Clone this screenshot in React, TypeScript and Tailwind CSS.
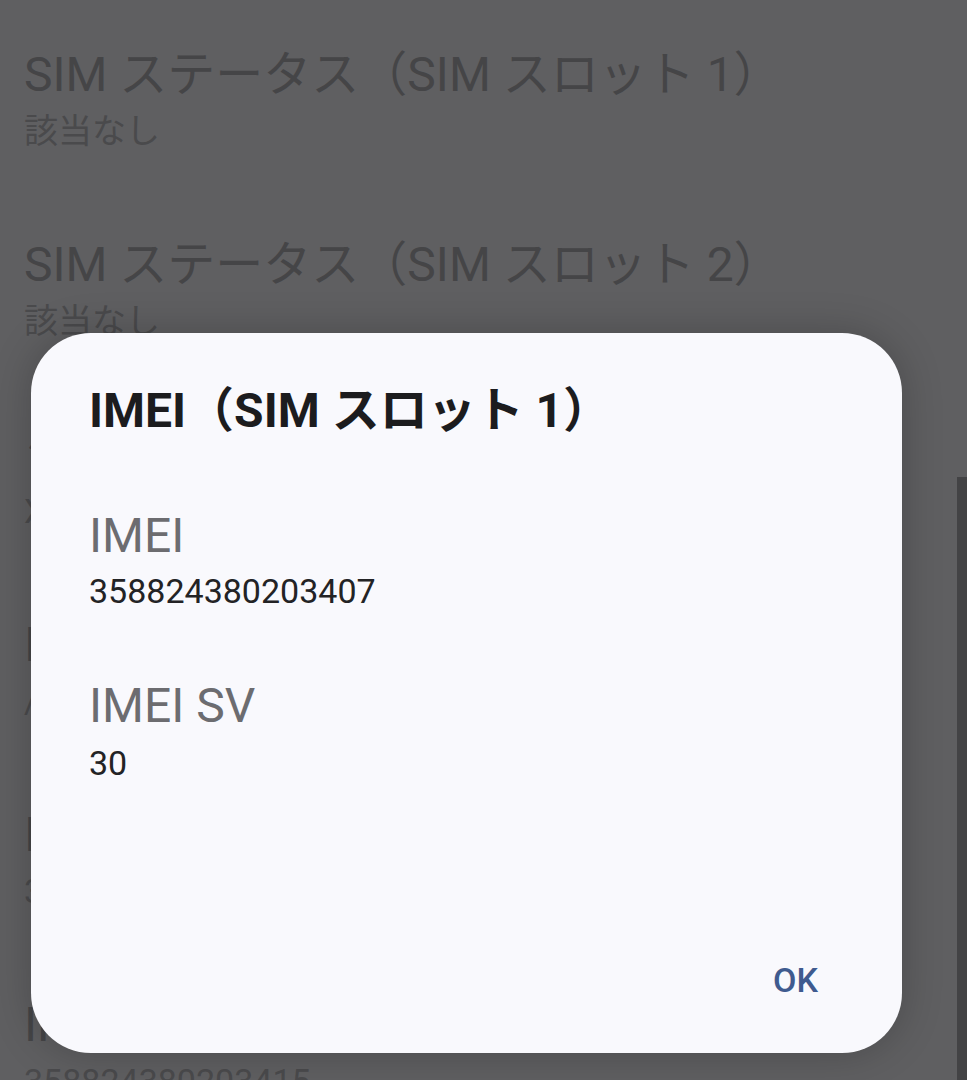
import React from "react";

const FONT = { fontFamily: 'Roboto, "Noto Sans CJK JP", "Noto Sans", sans-serif' };

const items: { title: string; sub: string }[] = [
  { title: "SIM ステータス（SIM スロット 1）", sub: "該当なし" },
  { title: "SIM ステータス（SIM スロット 2）", sub: "該当なし" },
  { title: "シリアル番号", sub: "XR58N70ABCD" },
  { title: "IMEI 情報", sub: "/ 該当なし" },
  { title: "IMEI（SIM スロット 1）", sub: "358824380203407" },
  { title: "IMEI（SIM スロット 2）", sub: "358824380203415" },
];

export default function App() {
  return (
    <div
      className="relative w-[967px] h-[1080px] overflow-hidden bg-[#5f5f61]"
      style={FONT}
    >
      {/* dimmed list behind */}
      <div className="flex flex-col pl-[24px] pt-[4px]">
        {items.map((it, i) => (
          <div key={i} className="flex flex-col py-[43px] gap-[8px]">
            <div className="text-[48px] leading-[56px] text-[#454547] whitespace-nowrap">
              {it.title}
            </div>
            <div className="text-[34px] leading-[40px] text-[#4a4a4c] whitespace-nowrap">
              {it.sub}
            </div>
          </div>
        ))}
      </div>

      {/* scrollbar */}
      <div className="absolute right-0 top-[477px] w-[10px] h-[603px] bg-[#434345]" />

      {/* dialog */}
      <div className="absolute left-[31px] top-[333px] w-[871px] h-[720px] rounded-[60px] bg-[#f9f9fd] shadow-[0_0_40px_rgba(0,0,0,0.22)] flex flex-col pl-[58px] pr-[72px] pt-[50px] pb-[53px]">
        <div className="text-[48px] leading-[56px] font-bold text-[#1c1c1e] whitespace-nowrap">
          IMEI（SIM スロット 1）
        </div>
        <div className="flex flex-col mt-[69px]">
          <div className="text-[48px] leading-[56px] text-[#6c6c70]">IMEI</div>
          <div className="mt-[7px] text-[34px] leading-[40px] text-[#232325]">358824380203407</div>
        </div>
        <div className="flex flex-col mt-[67px]">
          <div className="text-[48px] leading-[56px] text-[#6c6c70]">IMEI SV</div>
          <div className="mt-[9px] text-[34px] leading-[40px] text-[#232325]">30</div>
        </div>
        <div className="flex-1" />
        <div className="flex justify-end">
          <button className="text-[34px] leading-[40px] font-medium text-[#3f5b8f] px-[12px]">
            OK
          </button>
        </div>
      </div>
    </div>
  );
}
